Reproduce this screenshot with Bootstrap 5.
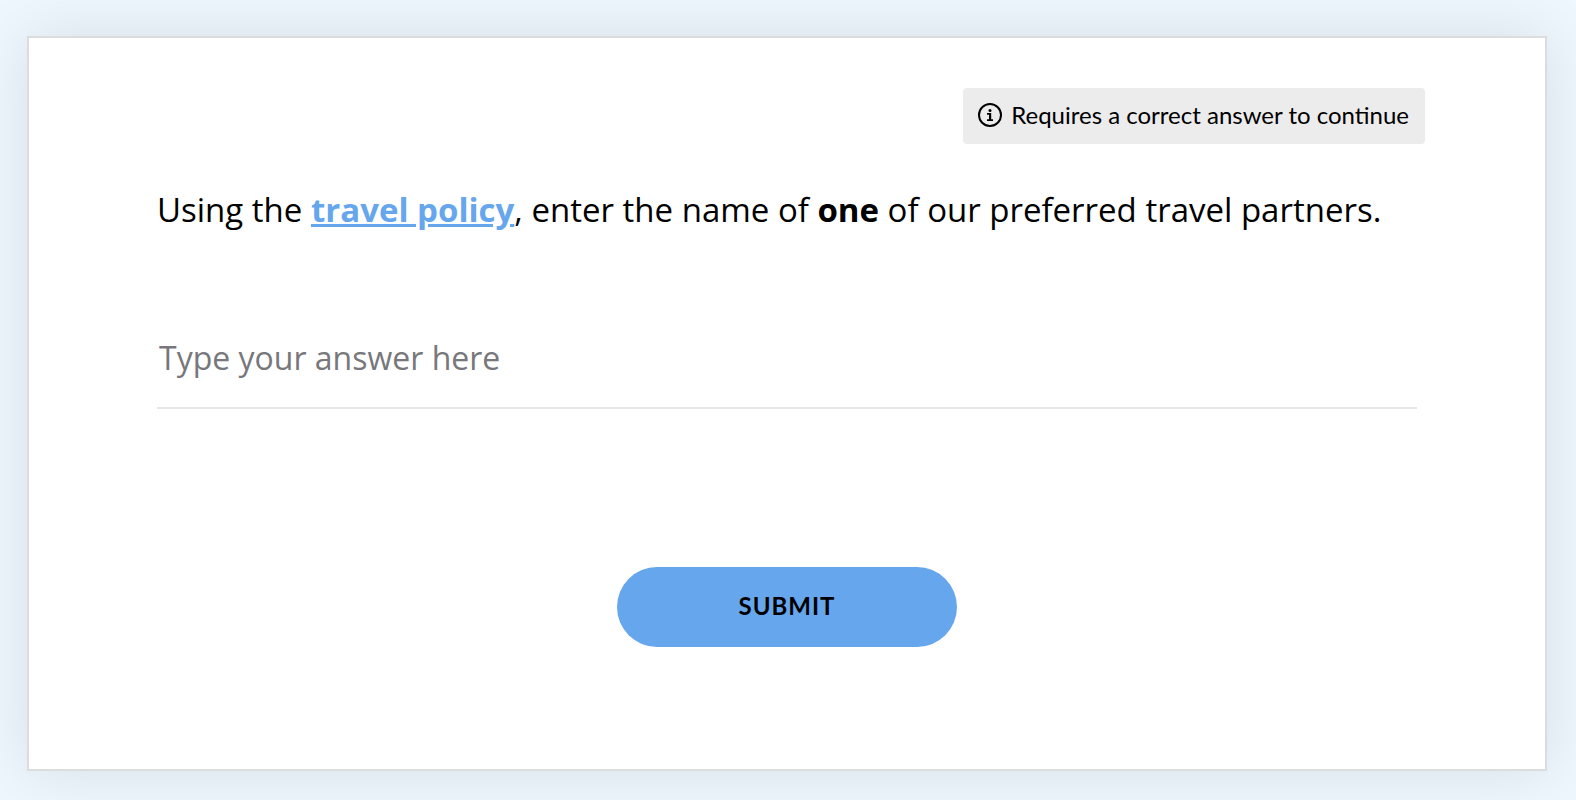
<!DOCTYPE html>
<html lang="en">
<head>
<meta charset="utf-8">
<meta name="viewport" content="width=device-width, initial-scale=1">
<title>Knowledge check</title>
<link href="https://cdn.jsdelivr.net/npm/bootstrap@5.3.0/dist/css/bootstrap.min.css" rel="stylesheet">
<style>
body { background: #eef6fe; color: #000; font-family: "Open Sans", sans-serif; }
.page-frame { padding: 36px 29px 29px 27px; }
.quiz-card { border: 2px solid #dcdcdc; border-radius: 0; box-shadow: 0 0 60px rgba(0, 0, 0, .1); color: #000; padding: 50px 128px 122px; }
.notice { background: #ececec; border-radius: 4px; font-family: Lato, sans-serif; font-size: 24px; line-height: 32px; padding: 11px 16px 13px 15px; gap: 9px; margin-right: -8px; }
.question { font-size: 33px; line-height: 48px; margin: 42px 0 0; }
.question a { color: #66a6ed; font-weight: 700; }
.answer { border: 0; border-bottom: 2px solid #e6e6e6; border-radius: 0; color: #000; font-size: 32px; line-height: 48px; padding: 23px 2px 25px; margin-top: 77px; }
.answer::placeholder { color: #77777c; }
.submit { background: #66a6ed; border: 0; border-radius: 40px; color: #000; font-family: Lato, sans-serif; font-size: 24px; font-weight: 700; letter-spacing: 1px; width: 340px; height: 80px; margin-top: 158px; padding-bottom: 8px; }
.submit:hover { background: #5298e4; color: #000; }
</style>
</head>
<body>
<main class="page-frame">
<form class="card quiz-card">
<div class="notice d-flex align-items-center align-self-end">
<svg width="24" height="24" viewBox="0 0 24 24" aria-hidden="true"><circle cx="12" cy="12" r="11" fill="none" stroke="#000" stroke-width="2"/><circle cx="12" cy="7.500" r="1.500"/><path d="M9 10h4.200v6.200H15V18H9v-1.800h2v-4.400H9z"/></svg>
<span>Requires a correct answer to continue</span>
</div>
<label class="question" for="answer">Using the <a href="#">travel policy</a>, enter the name of <strong>one</strong> of our preferred travel partners.</label>
<input class="form-control answer" id="answer" type="text" placeholder="Type your answer here">
<button class="btn submit align-self-center" type="submit">SUBMIT</button>
</form>
</main>
<script src="https://cdn.jsdelivr.net/npm/bootstrap@5.3.0/dist/js/bootstrap.bundle.min.js"></script>
</body>
</html>
